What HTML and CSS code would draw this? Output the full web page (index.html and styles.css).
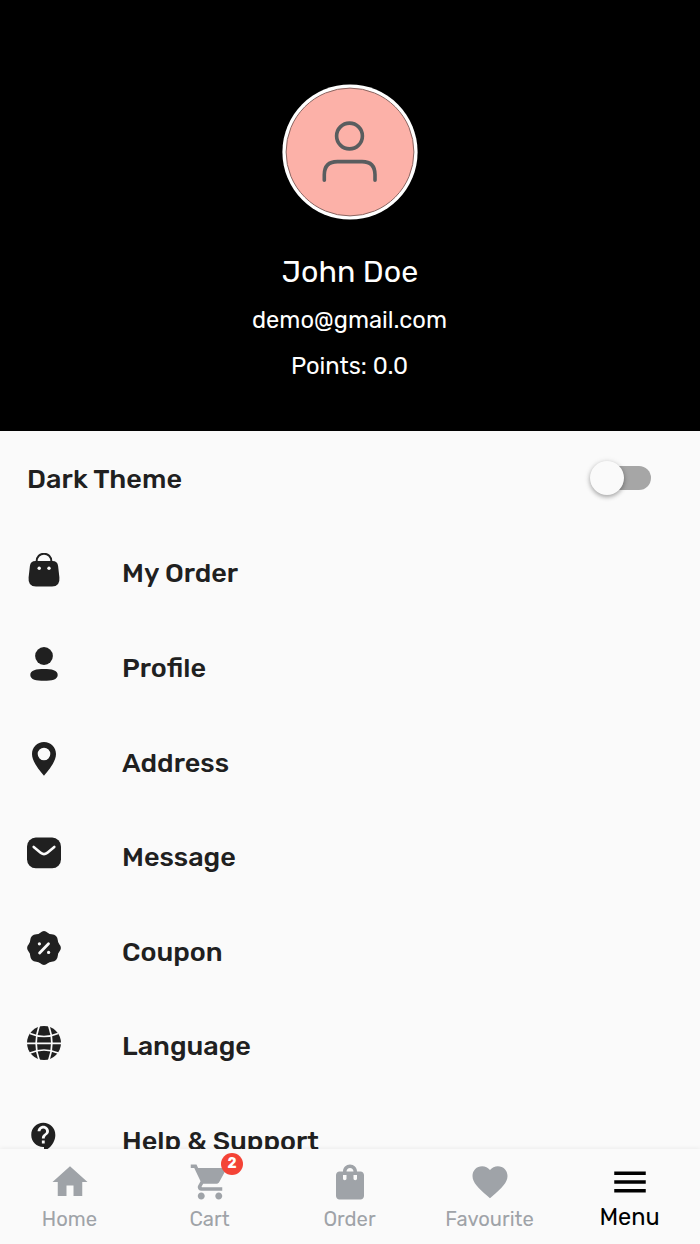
FILE: index.html
```html
<!DOCTYPE html>
<html lang="en">
<head>
<meta charset="utf-8">
<title>Menu</title>
<link rel="stylesheet" href="styles.css">
</head>
<body>
<div class="screen">
  <header class="profile">
    <svg class="avatar" viewBox="0 0 136 136">
      <circle cx="68" cy="68" r="67.6" fill="#fff"/>
      <circle cx="68" cy="68" r="63.9" fill="#fcb1a8" stroke="#8a6561" stroke-width="1"/>
      <g fill="none" stroke="#595d5f" stroke-width="3.6" stroke-linecap="round">
        <circle cx="67.500" cy="52" r="12.900"/>
        <path d="M42.300 96.300v-5.500Q42.300 77.600 55.500 77.600H80Q93 77.600 93 90.800v5.500"/>
      </g>
    </svg>
    <div class="name">John Doe</div>
    <div class="email">demo@gmail.com</div>
    <div class="points">Points: 0.0</div>
  </header>
  <main class="list">
    <div class="row theme"><span class="label">Dark Theme</span><span class="switch"><span class="thumb"></span></span></div>
    <div class="row">
      <svg class="icon" viewBox="0 0 34 34"><path d="M8.500 7.900h17q5 0 5.600 5l1.300 11.600q.9 9-7.400 9H9q-8.300 0-7.400-9L2.900 12.900q.6-5 5.600-5z"/><path d="M9.600 9C9.200-2 24.800-2 24.400 9" fill="none" stroke="#202020" stroke-width="2"/><circle cx="12.200" cy="15.200" r="1.700" fill="#fafafa"/><circle cx="22" cy="15.200" r="1.700" fill="#fafafa"/></svg>
      <span class="label">My Order</span></div>
    <div class="row">
      <svg class="icon" viewBox="0 0 34 34"><circle cx="17" cy="9" r="8.900"/><path d="M3.300 27.900c0-4.600 6-5.800 13.700-5.800s13.700 1.200 13.700 5.800-6 5.900-13.700 5.900-13.700-1.300-13.700-5.900z"/></svg>
      <span class="label">Profile</span></div>
    <div class="row">
      <svg class="icon" viewBox="0 0 34 34"><path fill-rule="evenodd" d="M17 0C10.200 0 5 5.200 5 12c0 8.500 9.500 18.500 12 21.700C19.500 30.500 29 20.500 29 12 29 5.200 23.800 0 17 0zm0 5.700a6.300 6.300 0 1 1 0 12.600 6.300 6.300 0 0 1 0-12.600z"/></svg>
      <span class="label">Address</span></div>
    <div class="row">
      <svg class="icon" viewBox="0 0 34 34"><rect y="1.600" width="34" height="30.700" rx="8.800"/><path d="M6.700 10.900l7.200 6q3.100 2.300 6.200 0l7.200-6" fill="none" stroke="#fafafa" stroke-width="2.600" stroke-linecap="round"/></svg>
      <span class="label">Message</span></div>
    <div class="row">
      <svg class="icon" viewBox="0 0 34 34"><path d="M13.300 1.700Q17-1.500 20.700 1.700Q22.400 3.200 24.700 3.200Q30.300 3.700 30.800 9.300Q30.800 11.600 32.300 13.300Q35.500 17 32.300 20.700Q30.800 22.400 30.800 24.700Q30.300 30.300 24.700 30.800Q22.400 30.800 20.700 32.300Q17 35.500 13.300 32.300Q11.600 30.800 9.300 30.800Q3.700 30.300 3.200 24.700Q3.200 22.400 1.700 20.700Q-1.500 17 1.700 13.300Q3.200 11.600 3.200 9.300Q3.700 3.700 9.300 3.200Q11.600 3.200 13.300 1.700z"/><path d="M12.600 21.900L21.500 12.800" stroke="#fafafa" stroke-width="2.800" stroke-linecap="round"/><circle cx="12.400" cy="12.800" r="1.600" fill="#fafafa"/><circle cx="21.600" cy="21.400" r="1.600" fill="#fafafa"/></svg>
      <span class="label">Coupon</span></div>
    <div class="row">
      <svg class="icon" viewBox="0 0 34 34"><circle cx="17" cy="17" r="17"/><g fill="none" stroke="#fafafa" stroke-width="1.700"><path d="M0 17.300h34M3 7.500q14 6 28 0M3 27q14-6 28 0"/><path d="M12.300-.5Q6 17 12.300 34.500M21.700-.5Q28 17 21.700 34.500"/></g></svg>
      <span class="label">Language</span></div>
    <div class="row">
      <svg class="icon" viewBox="0 0 24 24"><path d="M11.500 2C6.810 2 3 5.810 3 10.500S6.810 19 11.500 19h.5v3c4.860-2.340 8-7 8-11.500C20 5.810 16.190 2 11.500 2zm1 14.500h-2v-2h2v2zm0-3.500h-2c0-3.250 3-3 3-5 0-1.100-.9-2-2-2s-2 .9-2 2h-2c0-2.210 1.790-4 4-4s4 1.790 4 4c0 2.500-3 2.750-3 5z"/></svg>
      <span class="label">Help &amp; Support</span></div>
  </main>
  <nav class="nav">
    <div class="tab"><svg viewBox="0 0 24 24"><path d="M10 20v-6h4v6h5v-8h3L12 3 2 12h3v8z"/></svg><span>Home</span></div>
    <div class="tab"><svg viewBox="0 0 24 24"><path d="M7 18c-1.100 0-1.990.9-1.990 2S5.900 22 7 22s2-.9 2-2-.9-2-2-2zM1 2v2h2l3.600 7.590-1.350 2.450c-.16.280-.25.610-.25.960 0 1.100.9 2 2 2h12v-2H7.420c-.14 0-.25-.11-.25-.25l.03-.12.900-1.630h7.450c.75 0 1.410-.41 1.750-1.030l3.580-6.490c.08-.14.12-.31.12-.48 0-.55-.45-1-1-1H5.210l-.94-2H1zm16 16c-1.100 0-1.990.9-1.990 2s.89 2 1.990 2 2-.9 2-2-.9-2-2-2z"/></svg><span>Cart</span><b class="badge">2</b></div>
    <div class="tab"><svg viewBox="0 0 24 24"><path d="M18 6h-2c0-2.210-1.790-4-4-4S8 3.790 8 6H6c-1.100 0-2 .9-2 2v12c0 1.100.9 2 2 2h12c1.100 0 2-.9 2-2V8c0-1.100-.9-2-2-2zm-8 4c0 .55-.45 1-1 1s-1-.45-1-1V8h2v2zm2-6c1.100 0 2 .9 2 2h-4c0-1.100.9-2 2-2zm4 6c0 .55-.45 1-1 1s-1-.45-1-1V8h2v2z"/></svg><span>Order</span></div>
    <div class="tab"><svg viewBox="0 0 24 24"><path d="M12 21.350l-1.450-1.320C5.400 15.360 2 12.280 2 8.500 2 5.420 4.420 3 7.500 3c1.740 0 3.410.81 4.500 2.090C13.090 3.810 14.760 3 16.500 3 19.580 3 22 5.420 22 8.500c0 3.780-3.400 6.860-8.550 11.540L12 21.350z"/></svg><span>Favourite</span></div>
    <div class="tab active"><svg viewBox="0 0 24 24"><path d="M3 18h18v-2H3v2zm0-5h18v-2H3v2zm0-7v2h18V6H3z"/></svg><span>Menu</span></div>
  </nav>
</div>
</body>
</html>
```
FILE: styles.css
```css
* { box-sizing: border-box; }
body { margin: 0; background: #fafafa; font-family: Rubik, Roboto, sans-serif; }
.screen { width: 700px; height: 1244px; display: flex; flex-direction: column; overflow: hidden; }
.profile { flex: none; height: 431px; padding-top: 84px; background: #000; color: #fff; display: flex; flex-direction: column; align-items: center; }
.avatar { width: 136px; height: 136px; display: block; }
.name { margin-top: 34px; font-size: 30.4px; line-height: 36px; }
.email { margin-top: 15px; padding-right: 1px; font-size: 23.7px; line-height: 30px; }
.points { margin-top: 16px; padding-right: 1px; font-size: 23.7px; line-height: 30px; }
.list { flex: 1; min-height: 0; overflow: hidden; }
.row { height: 94.55px; padding: 1px 27px 0; display: flex; align-items: center; color: #202020; }
.theme { justify-content: space-between; padding-right: 49px; }
.theme .label { letter-spacing: .09px; }
.icon { width: 34px; height: 34px; margin: 0 61px 7px 0; fill: #202020; flex: none; }
.label { font-size: 27px; line-height: 32px; padding-top: .3px; font-weight: 500; white-space: nowrap; }
.switch { display: flex; align-items: center; width: 60px; height: 24px; margin-bottom: 1px; border-radius: 12px; background: #a6a6a6; }
.thumb { width: 34px; height: 34px; margin-left: -1px; border-radius: 50%; background: #fafafa; box-shadow: 0 2px 4px rgba(0,0,0,.26), 0 1px 6px rgba(0,0,0,.14); flex: none; }
.nav { flex: none; height: 95px; padding-top: 12px; display: flex; background: #fafafa; box-shadow: 0 -1px 4px rgba(0,0,0,.06); position: relative; }
.tab { width: 140px; display: flex; flex-direction: column; align-items: center; position: relative; color: #9fa3a8; font-size: 20.2px; line-height: 24px; }
.tab span { padding-right: 1px; }
.tab svg { width: 42px; height: 42px; fill: currentColor; margin-bottom: 4px; }
.active { color: #000; font-size: 23.5px; }
.active svg { margin-bottom: 2px; }
.badge { position: absolute; left: 81px; top: -8px; width: 22px; height: 22px; border-radius: 50%; background: #f44336; color: #fff; font-size: 14px; line-height: 22px; text-align: center; }
```
